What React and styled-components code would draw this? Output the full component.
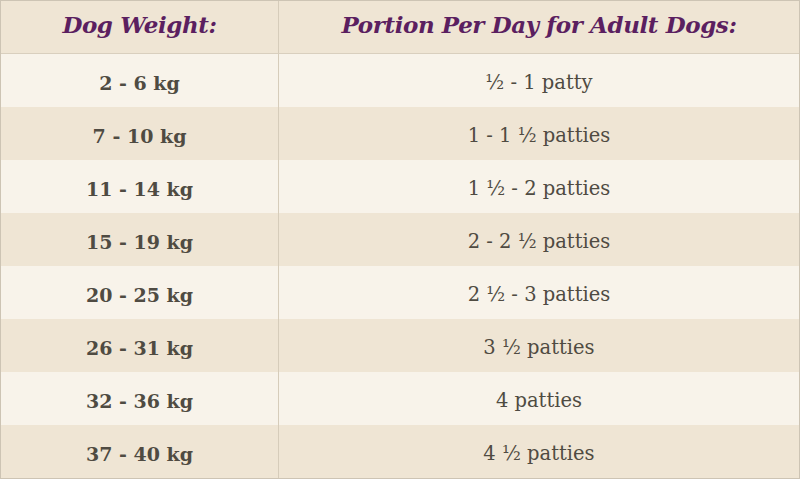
import React from "react";
import styled, { createGlobalStyle } from "styled-components";

const GlobalStyle = createGlobalStyle`
  html, body {
    margin: 0;
    padding: 0;
    background: #f8f3ea;
  }
  * {
    box-sizing: border-box;
  }
`;

const Table = styled.div`
  width: 800px;
  height: 479px;
  display: grid;
  grid-template-columns: 277px 1fr;
  grid-template-rows: repeat(9, 1fr);
  border: 1px solid #cdc4b4;
  font-family: "DejaVu Serif", "Liberation Serif", serif;
`;

const HeadCell = styled.div`
  display: flex;
  align-items: center;
  justify-content: center;
  background: #efe5d4;
  border-bottom: 1px solid #d9cfbe;
  border-left: ${props => (props.$first ? "none" : "1px solid #d6ccba")};
  color: #5b1f60;
  font-size: 23px;
  font-weight: 700;
  font-style: italic;
  letter-spacing: -0.4px;
  padding-bottom: 5px;
`;

const Cell = styled.div`
  display: flex;
  align-items: center;
  justify-content: center;
  background: ${props => (props.$alt ? "#efe5d4" : "#f8f3ea")};
  border-left: ${props => (props.$first ? "none" : "1px solid #d6ccba")};
  color: #4f4b42;
  font-size: ${props => (props.$bold ? "19px" : "19.5px")};
  font-weight: ${props => (props.$bold ? 700 : 400)};
  padding-top: 4px;
`;

const rows = [
  ["2 - 6 kg", "½ - 1 patty"],
  ["7 - 10 kg", "1 - 1 ½ patties"],
  ["11 - 14 kg", "1 ½ - 2 patties"],
  ["15 - 19 kg", "2 - 2 ½ patties"],
  ["20 - 25 kg", "2 ½ - 3 patties"],
  ["26 - 31 kg", "3 ½ patties"],
  ["32 - 36 kg", "4 patties"],
  ["37 - 40 kg", "4 ½ patties"],
];

const App = () => (
  <>
    <GlobalStyle />
    <Table>
      <HeadCell $first>Dog Weight:</HeadCell>
      <HeadCell>Portion Per Day for Adult Dogs:</HeadCell>
      {rows.map(([w, p], i) => (
        <React.Fragment key={w}>
          <Cell $first $bold $alt={i % 2 === 1}>{w}</Cell>
          <Cell $alt={i % 2 === 1}>{p}</Cell>
        </React.Fragment>
      ))}
    </Table>
  </>
);

export default App;
